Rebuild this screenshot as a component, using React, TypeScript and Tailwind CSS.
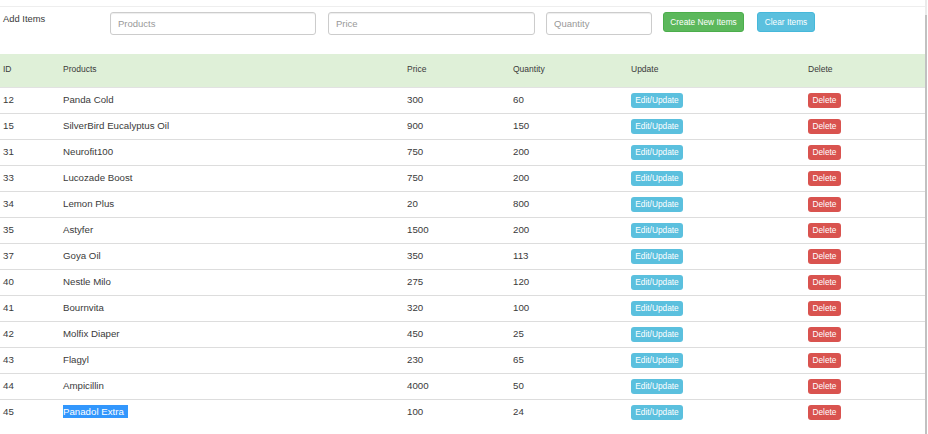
import React from "react";

const rows: [string, string, string, string][] = [
  ["12", "Panda Cold", "300", "60"],
  ["15", "SilverBird Eucalyptus Oil", "900", "150"],
  ["31", "Neurofit100", "750", "200"],
  ["33", "Lucozade Boost", "750", "200"],
  ["34", "Lemon Plus", "20", "800"],
  ["35", "Astyfer", "1500", "200"],
  ["37", "Goya Oil", "350", "113"],
  ["40", "Nestle Milo", "275", "120"],
  ["41", "Bournvita", "320", "100"],
  ["42", "Molfix Diaper", "450", "25"],
  ["43", "Flagyl", "230", "65"],
  ["44", "Ampicillin", "4000", "50"],
  ["45", "Panadol Extra", "100", "24"],
];

const grid = "grid grid-cols-[60px_344px_106px_118px_177px_1fr] pl-[3px]";

export default function App() {
  return (
    <div className="w-[928px] h-[434px] overflow-hidden bg-white flex font-['Liberation_Sans',Arial,sans-serif] text-[9.7px] text-[#3a3a3a]">
      <div className="w-[925px] flex flex-col">
        <div className="h-[7px] border-b border-[#eee]" />
        <div className="flex items-start pt-[5px] h-[47px]">
          <div className="w-[110px] pl-[3px] text-[9.4px] leading-[14px]">Add Items</div>
          <input
            placeholder="Products"
            className="w-[206px] h-[23px] border border-[#ccc] rounded-[3px] px-[7px] text-[9.5px] placeholder:text-[#999] outline-none shadow-[inset_0_1px_1px_rgba(0,0,0,0.075)]"
          />
          <input
            placeholder="Price"
            className="ml-[12px] w-[207px] h-[23px] border border-[#ccc] rounded-[3px] px-[7px] text-[9.5px] placeholder:text-[#999] outline-none shadow-[inset_0_1px_1px_rgba(0,0,0,0.075)]"
          />
          <input
            placeholder="Quantity"
            className="ml-[11px] w-[106px] h-[23px] border border-[#ccc] rounded-[3px] px-[7px] text-[9.5px] placeholder:text-[#999] outline-none shadow-[inset_0_1px_1px_rgba(0,0,0,0.075)]"
          />
          <button className="ml-[11px] w-[81px] h-[20px] bg-[#5cb85c] border border-[#4cae4c] rounded-[3px] text-white text-[8.3px] flex items-center justify-center">
            Create New Items
          </button>
          <button className="ml-[13px] w-[58px] h-[20px] bg-[#5bc0de] border border-[#46b8da] rounded-[3px] text-white text-[8.3px] flex items-center justify-center">
            Clear Items
          </button>
        </div>
        <div className={`${grid} h-[33px] bg-[#dff0d8] items-center text-[8.5px] pb-[2px]`}>
          <div>ID</div>
          <div>Products</div>
          <div>Price</div>
          <div>Quantity</div>
          <div>Update</div>
          <div>Delete</div>
        </div>
        {rows.map((r, i) => (
          <div
            key={r[0]}
            className={`${grid} h-[26px] items-center border-t ${i === 0 ? "border-[#e2e2e2]" : "border-[#ddd]"}`}
          >
            <div>{r[0]}</div>
            <div>
              {i === rows.length - 1 ? (
                <span className="bg-[#3297fd] text-white leading-[13px] inline-block pr-[4px]">{r[1]}</span>
              ) : (
                r[1]
              )}
            </div>
            <div>{r[2]}</div>
            <div>{r[3]}</div>
            <div>
              <span className="inline-flex items-center justify-center w-[52px] h-[15px] bg-[#5bc0de] rounded-[3px] text-white text-[8.3px]">
                Edit/Update
              </span>
            </div>
            <div>
              <span className="inline-flex items-center justify-center w-[33px] h-[15px] bg-[#d9534f] rounded-[3px] text-white text-[8.3px]">
                Delete
              </span>
            </div>
          </div>
        ))}
      </div>
      <div className="w-[2px] flex flex-col">
        <div className="h-[15px] bg-[#eaeaea]" />
        <div className="flex-1 bg-[#c1c1c1]" />
      </div>
      <div className="w-px" />
    </div>
  );
}
